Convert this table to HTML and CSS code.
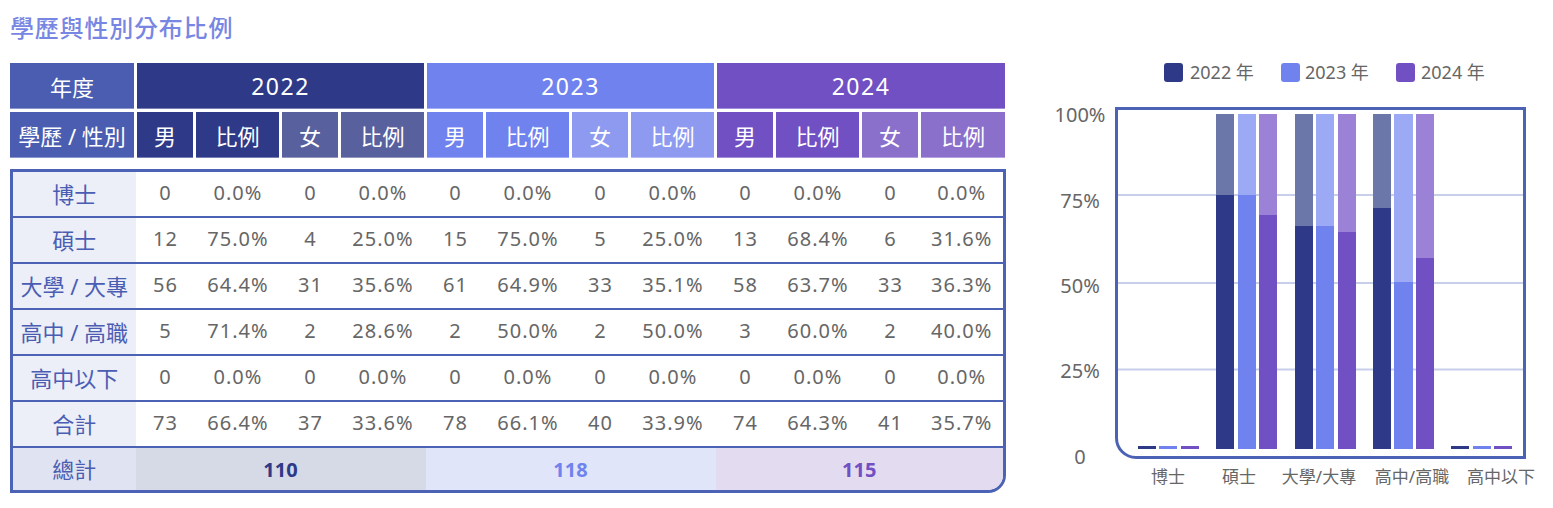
FILE: index.html
```html
<!DOCTYPE html>
<html lang="zh-Hant">
<head>
<meta charset="utf-8">
<title>學歷與性別分布比例</title>
<link rel="stylesheet" href="styles.css">
</head>
<body>
<div class="page">
  <section class="left">
    <h2 class="title">學歷與性別分布比例</h2>
    <div class="thead">
      <div class="th th-label">年度</div>
      <div class="th year c22 span4">2022</div>
      <div class="th year c23 span4">2023</div>
      <div class="th year c24 span4">2024</div>
      <div class="th th-label">學歷 / 性別</div>
      <div class="th c22">男</div>
      <div class="th c22">比例</div>
      <div class="th c22f">女</div>
      <div class="th c22f">比例</div>
      <div class="th c23">男</div>
      <div class="th c23">比例</div>
      <div class="th c23f">女</div>
      <div class="th c23f">比例</div>
      <div class="th c24">男</div>
      <div class="th c24">比例</div>
      <div class="th c24f">女</div>
      <div class="th c24f">比例</div>
    </div>
    <div class="tbody">
      <div class="row">
        <div class="lbl">博士</div>
        <div class="cell">0</div><div class="cell">0.0%</div><div class="cell">0</div><div class="cell">0.0%</div>
        <div class="cell">0</div><div class="cell">0.0%</div><div class="cell">0</div><div class="cell">0.0%</div>
        <div class="cell">0</div><div class="cell">0.0%</div><div class="cell">0</div><div class="cell">0.0%</div>
      </div>
      <div class="row">
        <div class="lbl">碩士</div>
        <div class="cell">12</div><div class="cell">75.0%</div><div class="cell">4</div><div class="cell">25.0%</div>
        <div class="cell">15</div><div class="cell">75.0%</div><div class="cell">5</div><div class="cell">25.0%</div>
        <div class="cell">13</div><div class="cell">68.4%</div><div class="cell">6</div><div class="cell">31.6%</div>
      </div>
      <div class="row">
        <div class="lbl">大學 / 大專</div>
        <div class="cell">56</div><div class="cell">64.4%</div><div class="cell">31</div><div class="cell">35.6%</div>
        <div class="cell">61</div><div class="cell">64.9%</div><div class="cell">33</div><div class="cell">35.1%</div>
        <div class="cell">58</div><div class="cell">63.7%</div><div class="cell">33</div><div class="cell">36.3%</div>
      </div>
      <div class="row">
        <div class="lbl">高中 / 高職</div>
        <div class="cell">5</div><div class="cell">71.4%</div><div class="cell">2</div><div class="cell">28.6%</div>
        <div class="cell">2</div><div class="cell">50.0%</div><div class="cell">2</div><div class="cell">50.0%</div>
        <div class="cell">3</div><div class="cell">60.0%</div><div class="cell">2</div><div class="cell">40.0%</div>
      </div>
      <div class="row">
        <div class="lbl">高中以下</div>
        <div class="cell">0</div><div class="cell">0.0%</div><div class="cell">0</div><div class="cell">0.0%</div>
        <div class="cell">0</div><div class="cell">0.0%</div><div class="cell">0</div><div class="cell">0.0%</div>
        <div class="cell">0</div><div class="cell">0.0%</div><div class="cell">0</div><div class="cell">0.0%</div>
      </div>
      <div class="row">
        <div class="lbl">合計</div>
        <div class="cell">73</div><div class="cell">66.4%</div><div class="cell">37</div><div class="cell">33.6%</div>
        <div class="cell">78</div><div class="cell">66.1%</div><div class="cell">40</div><div class="cell">33.9%</div>
        <div class="cell">74</div><div class="cell">64.3%</div><div class="cell">41</div><div class="cell">35.7%</div>
      </div>
      <div class="row total">
        <div class="lbl">總計</div>
        <div class="tot t22">110</div>
        <div class="tot t23">118</div>
        <div class="tot t24">115</div>
      </div>
    </div>
  </section>
  <aside class="chart">
    <svg class="chart-svg" width="523" height="508" viewBox="0 0 523 508">
      <g class="legend">
        <rect x="134" y="63" width="19" height="19" rx="3" fill="#2e3a87"/>
        <text x="160" y="79">2022 年</text>
        <rect x="251" y="63" width="19" height="19" rx="3" fill="#7082ee"/>
        <text x="275" y="79">2023 年</text>
        <rect x="366" y="63" width="19" height="19" rx="3" fill="#7150c4"/>
        <text x="391" y="79">2024 年</text>
      </g>
      <g class="yaxis">
        <text x="50" y="122">100%</text>
        <text x="50" y="208">75%</text>
        <text x="50" y="293">50%</text>
        <text x="50" y="378">25%</text>
        <text x="50" y="464">0</text>
      </g>
      <g class="grid">
        <line x1="87" x2="494" y1="195" y2="195"/>
        <line x1="87" x2="494" y1="283" y2="283"/>
        <line x1="87" x2="494" y1="369.5" y2="369.5"/>
      </g>
      <g class="bars">
        <rect x="108" y="446" width="18" height="3" fill="#2e3a87"/>
        <rect x="129" y="446" width="18" height="3" fill="#7082ee"/>
        <rect x="151" y="446" width="18" height="3" fill="#7150c4"/>

        <rect x="186" y="114" width="18" height="81" fill="#6c77a9"/>
        <rect x="186" y="195" width="18" height="254" fill="#2e3a87"/>
        <rect x="208" y="114" width="18" height="81" fill="#9ca9f5"/>
        <rect x="208" y="195" width="18" height="254" fill="#7082ee"/>
        <rect x="229" y="114" width="18" height="101" fill="#9b82d6"/>
        <rect x="229" y="215" width="18" height="234" fill="#7150c4"/>

        <rect x="265" y="114" width="18" height="112" fill="#6c77a9"/>
        <rect x="265" y="226" width="18" height="223" fill="#2e3a87"/>
        <rect x="286" y="114" width="18" height="112" fill="#9ca9f5"/>
        <rect x="286" y="226" width="18" height="223" fill="#7082ee"/>
        <rect x="308" y="114" width="18" height="118" fill="#9b82d6"/>
        <rect x="308" y="232" width="18" height="217" fill="#7150c4"/>

        <rect x="343" y="114" width="18" height="94" fill="#6c77a9"/>
        <rect x="343" y="208" width="18" height="241" fill="#2e3a87"/>
        <rect x="364" y="114" width="19" height="168" fill="#9ca9f5"/>
        <rect x="364" y="282" width="19" height="167" fill="#7082ee"/>
        <rect x="386" y="114" width="18" height="144" fill="#9b82d6"/>
        <rect x="386" y="258" width="18" height="191" fill="#7150c4"/>

        <rect x="421" y="446" width="18" height="3" fill="#2e3a87"/>
        <rect x="443" y="446" width="18" height="3" fill="#7082ee"/>
        <rect x="464" y="446" width="18" height="3" fill="#7150c4"/>
      </g>
      <path class="frame" d="M86.5 108.5 H494.5 V457.5 H106 A19.5 19.5 0 0 1 86.5 438 Z"/>
      <g class="xaxis">
        <text x="138" y="483">博士</text>
        <text x="209" y="483">碩士</text>
        <text x="289" y="483">大學/大專</text>
        <text x="382" y="483">高中/高職</text>
        <text x="471" y="483">高中以下</text>
      </g>
    </svg>
  </aside>
</div>
</body>
</html>
```
FILE: styles.css
```css
* { box-sizing: border-box; }

body {
  margin: 0;
  background: #ffffff;
  font-family: "Noto Sans", "Noto Sans CJK TC", sans-serif;
}

.page {
  display: flex;
  width: 1553px;
  height: 508px;
  overflow: hidden;
}

.left {
  flex: 0 0 1030px;
  padding: 10px 0 0 10px;
}

.title {
  margin: 0 0 19px;
  font-family: "Noto Sans CJK TC", sans-serif;
  font-size: 24px;
  line-height: 34px;
  font-weight: 500;
  letter-spacing: 0.8px;
  color: #7886e3;
}

/* header */
.thead {
  display: grid;
  width: 996px;
  grid-template-columns: 124px repeat(2, 56px 83px 56px 83px) 56px 83px 56px 84px;
  grid-auto-rows: 46px;
  gap: 3px;
}

.th {
  display: flex;
  align-items: center;
  justify-content: center;
  color: #ffffff;
  font-family: "Noto Sans", "Noto Sans CJK TC", sans-serif;
  font-size: 22px;
  padding-bottom: 1px;
  box-shadow: inset 0 -1px 0 rgba(255, 255, 255, 0.35);
}

.span4 { grid-column: span 4; }

.year {
  font-size: 23px;
  letter-spacing: 1.5px;
}

.th-label { background: #4a5db0; }
.c22 { background: #2e3a87; }
.c22f { background: #59609e; }
.c23 { background: #7082ee; }
.c23f { background: #8d9af0; }
.c24 { background: #7150c4; }
.c24f { background: #8b70cb; }

/* body */
.tbody {
  margin-top: 11px;
  width: 996px;
  border: 3px solid #4c62b4;
  border-radius: 0 0 18px 0;
  overflow: hidden;
}

.row {
  display: grid;
  grid-template-columns: 122.5px repeat(2, 59px 86px 59px 86px) 59px 86px 59px 1fr;
  height: 46px;
  border-bottom: 2px solid #4c62b4;
}

.row.total {
  height: 42px;
  border-bottom: none;
}

.lbl,
.cell,
.tot {
  display: flex;
  align-items: center;
  justify-content: center;
}

.lbl {
  background: #eceef8;
  color: #4a5db3;
  font-size: 22px;
  font-family: "Noto Sans", "Noto Sans CJK TC", sans-serif;
  padding-bottom: 3px;
}

.cell {
  color: #666666;
  font-size: 20px;
  letter-spacing: 1px;
  padding: 0 0 3px 1px;
}

.total .lbl { background: #e0e3f2; }

.tot {
  grid-column: span 4;
  font-size: 20px;
  font-weight: 700;
}

.t22 { background: #d6d9e6; color: #2e3a87; }
.t23 { background: #e1e5fa; color: #6f82ee; }
.t24 { background: #e3dcf1; color: #7150c4; }

/* chart */
.chart {
  flex: 0 0 523px;
}

.chart-svg { display: block; }

.legend text {
  font-family: "Noto Sans", "Noto Sans CJK TC", sans-serif;
  font-size: 18px;
  fill: #666666;
}

.yaxis text {
  font-family: "Noto Sans", sans-serif;
  font-size: 20px;
  fill: #666666;
  text-anchor: middle;
}

.xaxis text {
  font-family: "Noto Sans", "Noto Sans CJK TC", sans-serif;
  font-size: 17px;
  fill: #666666;
  text-anchor: middle;
}

.grid line {
  stroke: #c8cfeb;
  stroke-width: 2;
}

.frame {
  fill: none;
  stroke: #4c62b4;
  stroke-width: 3;
}
```
